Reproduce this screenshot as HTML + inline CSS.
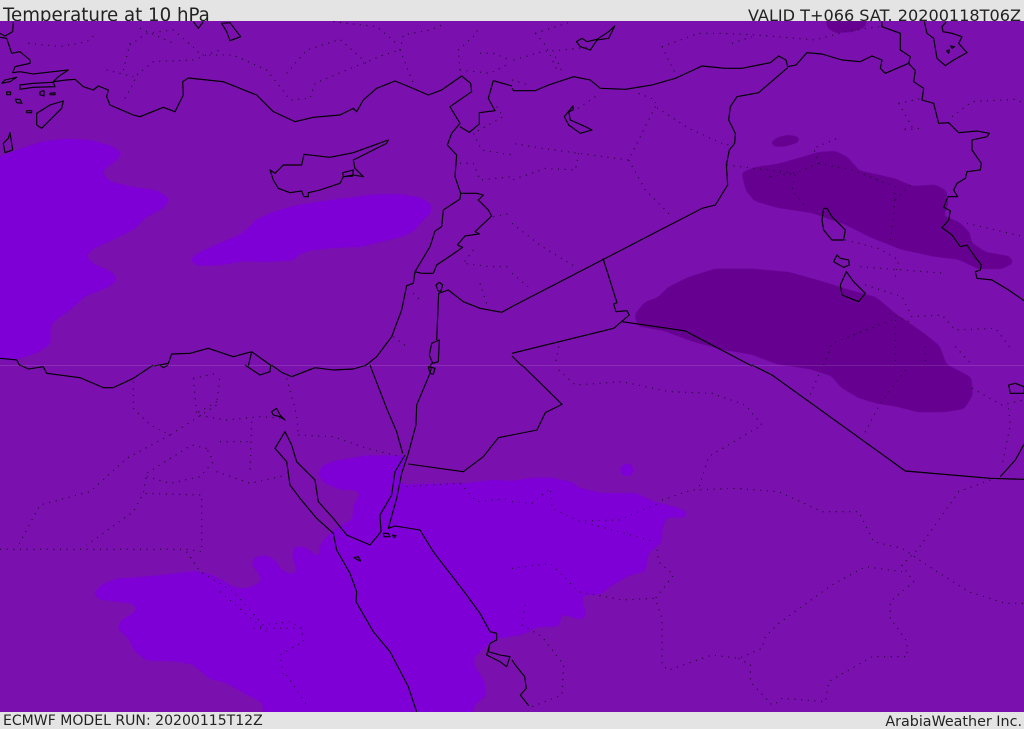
<!DOCTYPE html>
<html><head><meta charset="utf-8">
<style>
html,body{margin:0;padding:0;width:1024px;height:729px;overflow:hidden;background:#e4e4e4}
#w{position:relative;width:1024px;height:729px;overflow:hidden;background:#e4e4e4;font-family:"DejaVu Sans",sans-serif;color:#222}
.t{position:absolute;white-space:nowrap;line-height:1}
svg{position:absolute;left:0;top:21px}
.l{fill:none;stroke:#000;stroke-width:3.4;stroke-linejoin:round}
.d{fill:none;stroke:#000;stroke-width:3.2;stroke-dasharray:3 17;opacity:.8}
.b{fill:#7e00d6;stroke:#7e00d6;stroke-width:8;stroke-linejoin:round}
.k{fill:#660090;stroke:#660090;stroke-width:8;stroke-linejoin:round}
</style></head><body><div id="w">
<div class="t" style="left:3px;top:7px;font-size:18.2px;height:14px;overflow:hidden;line-height:18px">Temperature at 10 hPa</div>
<div class="t" style="right:3px;top:8px;font-size:16.1px;height:13px;overflow:hidden;line-height:16px">VALID T+066 SAT. 20200118T06Z</div>
<div class="t" style="left:3px;top:713px;font-size:14.06px;line-height:16px">ECMWF MODEL RUN: 20200115T12Z</div>
<div class="t" style="right:2px;top:714px;font-size:14.3px;line-height:16px">ArabiaWeather Inc.</div>
<svg width="1024" height="691" viewBox="0 21 1024 691" xmlns="http://www.w3.org/2000/svg">
<defs><filter id="s" x="-10%" y="-10%" width="120%" height="120%" color-interpolation-filters="sRGB"><feGaussianBlur stdDeviation="6"/><feComponentTransfer><feFuncA type="linear" slope="6" intercept="-2.5"/></feComponentTransfer></filter></defs>
<rect x="0" y="21" width="1024" height="691" fill="#7a10ad"/>
<g transform="scale(.33333)">
<polygon class="b" filter="url(#s)" points="-40,490 60,450 130,428 200,420 270,424 330,440 362,460 345,480 310,505 305,525 330,548 400,565 470,575 505,597 490,620 435,650 400,685 340,715 275,745 253,770 280,795 335,820 347,840 320,860 255,885 210,925 155,965 148,985 148,1030 110,1055 40,1078 -40,1072"/>
<polygon class="b" filter="url(#s)" points="575,778 600,760 660,733 720,708 750,685 770,662 820,640 880,622 960,608 1040,598 1120,587 1200,586 1260,596 1290,615 1290,638 1265,660 1240,690 1200,708 1130,725 1080,737 1000,740 930,748 895,760 880,778 800,782 730,780 660,792 590,793"/>
<g class="l">
<path d="M0,112L20,115 35,160 60,155 90,180 90,190 45,200 38,218 60,215 100,222 205,210 175,230 160,245 200,240 225,238 250,260 280,270 295,258 325,270 320,290 330,315 365,330 400,345 420,350 490,322 525,335 550,285 548,245 565,234 670,245 770,285 820,335 885,365 940,352 1020,345 1060,325 1070,335 1090,300 1130,265 1185,243 1215,255 1285,285 1325,270 1385,228 1412,250 1415,275 1350,320 1380,370 1355,400 1342,435 1370,465 1365,530 1382,580 1380,597 1330,630 1325,680 1305,693 1290,740 1245,815 1240,850 1220,857 1205,930 1175,1010 1130,1070 1095,1098"/>
<path d="M815,1098L755,1055 745,1098M755,1055L700,1070 625,1045 570,1060 515,1062 505,1090 462,1098M60,1098L50,1080 0,1075"/>
<path d="M40,65L38,95 15,108 0,100"/>
<path d="M1380,380L1408,397 1438,372 1438,338 1485,332 1465,295 1480,242 1536,258"/>
<path d="M810,510L825,520 850,495 905,495 912,463 990,472 1060,458 1165,420 1160,430 1090,465 1060,480 1065,505 1090,530 1060,525 1030,530 1020,550 960,570 925,578 925,590 912,590 905,573 870,578 835,565 820,540Z"/>
<path d="M1028,518L1060,510 1058,528 1030,530Z"/>
<path d="M190,303L185,325 150,360 125,385 110,375 110,340 150,315Z"/>
<path d="M15,240L50,232 30,245 5,250Z"/>
<path d="M60,255L100,250 160,247 165,260 100,262 60,268Z"/>
<path d="M30,398L35,430 38,450 15,458 10,430 25,415Z"/>
<path d="M665,70L690,68 722,110 690,122 680,95Z"/>
<path d="M580,65L595,85 610,65"/>
<path d="M120,275L132,272 132,288 120,284ZM150,280L165,278 165,284 150,284ZM20,276L32,276 32,284 20,284ZM46,298L60,298 66,310 50,308ZM80,332L95,332 95,338 80,338Z"/>
<path d="M1380,580L1430,580 1450,585 1435,600 1465,630 1475,648 1425,695 1438,702 1395,708 1372,735 1388,742 1355,765 1310,795 1300,820 1265,820 1245,815"/>
<path d="M1308,855L1318,847 1328,855 1322,875 1314,872Z"/>
<path d="M1316,880L1310,1020M1295,1030L1318,1020 1315,1085 1298,1090 1288,1065Z"/>
<path d="M1316,880L1345,870 1390,905 1440,925 1505,937 1536,920"/>
<path d="M1290,1098L1296,1090"/>
</g>
<g class="d">
<path d="M85,130L180,140 260,125 290,100"/>
<path d="M390,135L440,100 520,90 590,150 600,165 700,165 800,210 840,260 870,300 930,295 945,250 1040,210 1150,165 1200,150"/>
<path d="M375,295L395,260 410,225 460,185 580,180 660,150"/>
<path d="M320,210L400,230M370,210L390,130"/>
<path d="M860,220L920,150 1020,118 1090,180 1100,195"/>
<path d="M1200,150L1210,105 1290,90 1325,75M1380,210L1375,150 1430,100 1435,75M1200,150L1240,250"/>
<path d="M1380,210L1470,220 1530,190M1440,160L1480,160 1530,180"/>
<path d="M1490,320L1510,350 1420,400 1445,450 1536,465M1380,490L1420,490 1440,540 1536,530"/>
<path d="M1480,650L1536,640M1420,750L1390,790 1470,800 1536,800M1440,850L1460,910M1240,880L1260,900M1180,1010L1220,1040"/>
<path d="M1000,65L1130,80 1190,130M420,85L520,130"/>
</g>
</g>
<g transform="translate(512,0) scale(.33333)">
<polygon class="k" filter="url(#s)" points="693,520 730,505 800,495 860,478 920,460 970,457 1005,475 1040,515 1100,528 1150,540 1200,562 1270,558 1300,575 1305,610 1290,650 1340,670 1370,700 1375,730 1420,760 1490,772 1500,787 1470,803 1400,803 1340,775 1260,765 1170,745 1080,710 1000,670 900,635 800,620 730,600 705,570"/>
<polygon class="k" filter="url(#s)" points="372,945 400,910 440,895 470,865 530,835 610,810 720,810 830,820 920,845 1000,870 1090,895 1150,945 1230,1000 1280,1040 1300,1095 1375,1135 1378,1185 1355,1223 1300,1232 1220,1233 1150,1215 1100,1208 1040,1190 990,1160 960,1125 900,1105 840,1095 800,1090 720,1060 630,1045 540,1020 460,990 380,975"/>
<polygon class="k" filter="url(#s)" points="780,428 800,415 830,408 860,415 855,425 820,435 790,437"/>
<polygon class="k" filter="url(#s)" points="945,30 1058,30 1058,78 1020,92 970,95 948,80"/>
<g class="l">
<path d="M0,265L5,272 70,272 110,255 185,230 235,240 265,265 340,268 420,255 490,235 570,198 640,205 690,205 775,188 800,168 822,180 827,200 852,195 885,158 930,162 990,180 1045,185 1080,168 1110,180 1105,205 1120,220 1190,190"/>
<path d="M1110,65L1110,80 1165,100 1165,150 1195,170 1190,190 1210,212 1205,245 1235,265 1230,300 1265,310 1280,370 1310,368 1340,398 1395,393 1432,400 1425,410 1380,420 1380,450 1408,490 1405,510 1365,515 1360,535 1335,550 1325,570 1337,590 1308,590 1295,622 1315,632 1310,660 1290,683 1320,705 1345,740 1365,735 1385,765 1408,795 1405,810 1390,815 1395,835 1440,840 1490,870 1536,902"/>
<path d="M1237,65L1245,100 1265,115 1275,175 1300,197 1325,180 1365,158 1340,130 1350,110 1320,100 1293,95 1290,80 1303,65"/>
<path d="M1304,152L1312,150 1310,160ZM1316,138L1328,140 1320,145Z"/>
<path d="M827,203L740,278 675,290 655,320 650,360 670,400 668,430 652,450 643,495 647,555 610,615 570,625 0,920"/>
<path d="M273,775L315,908 305,912 312,935 345,932 352,945 305,985 0,1060"/>
<path d="M330,965L520,993 720,1098"/>
<path d="M0,1068L30,1098"/>
<path d="M935,625L930,660 935,690 960,720 995,720 1000,690 960,650 945,625Z"/>
<path d="M975,765L965,785 995,802 1012,795 1010,780 985,775Z"/>
<path d="M1003,815L985,855 990,885 1040,905 1060,880 1025,845Z"/>
<path d="M183,318L157,350 170,375 205,400 240,390 220,380 175,360 170,335 183,330Z"/>
<path d="M308,78L290,95 255,118 225,125 210,115 193,125 205,140 235,150 255,120 290,115 300,95Z"/>
</g>
<g class="d">
<path d="M70,100L180,65M70,100L100,135 135,210M5,180L90,155 170,148 240,140M130,170L150,215"/>
<path d="M450,140L560,100 630,100 735,105 910,120 1000,95 1100,80M450,140L490,220M660,130L735,105M0,240L50,255"/>
<path d="M250,290L190,330M380,280L430,300 430,320 530,385 640,435 668,430"/>
<path d="M430,320L350,480 200,460 90,445 0,430M350,480L400,570 480,650M200,460L190,510 100,505 0,540"/>
<path d="M645,495L850,520 920,490 905,445 975,415M775,530L850,520 840,570 880,620"/>
<path d="M920,490L1020,510 1150,560 1145,650 1135,720M1150,600L1200,550M1160,310L1230,295M1160,310L1200,380 1170,390 1225,385"/>
<path d="M1320,350L1380,305 1510,298 1536,310M1000,720L1100,745 1160,780 1150,830M1045,800L1300,820M1365,670L1536,710"/>
<path d="M1060,855L1170,890 1200,950 1290,945 1330,990 1450,985 1500,1050M1190,965L1120,935M1140,960L960,1030 935,1095M1150,960L1150,1090M1240,1040L1240,1095M1330,1040L1380,1095"/>
<path d="M0,670L90,740 190,800M0,820L60,870M140,1040L130,1095"/>
</g>
</g>
<g transform="translate(0,365) scale(.33333)">
<polygon class="b" filter="url(#s)" points="285,685 310,660 350,645 420,640 500,632 580,622 620,628 670,650 700,670 735,675 770,662 790,648 780,625 760,600 765,580 800,575 825,590 840,615 870,632 895,625 890,600 880,575 885,550 910,548 935,565 965,592 960,565 965,540 985,515 1010,495 1060,465 1065,420 1085,385 1070,372 1020,370 975,350 957,328 970,305 1010,290 1100,275 1200,275 1215,275 1205,300 1195,345 1205,362 1300,360 1400,358 1480,348 1536,352 1596,342 1656,342 1716,355 1736,372 1806,388 1906,388 1966,415 2046,435 2059,453 1996,455 1984,490 1981,530 1941,565 1934,615 1886,628 1831,660 1801,685 1746,687 1744,710 1756,750 1741,760 1681,742 1676,780 1611,783 1566,805 1536,810 1480,820 1420,875 1418,900 1450,950 1455,990 1418,1020 1418,1090 800,1090 790,1010 740,985 680,950 630,938 580,895 520,885 440,883 405,855 390,820 357,790 365,770 405,745 418,728 395,712 300,700"/>
<ellipse class="b" cx="1881" cy="315" rx="16" ry="14"/>
<g class="l">
<path d="M1100,0L1060,12 1000,15 945,8 875,35 845,22 815,0M735,0L780,30 810,20 812,0M460,0L400,40 340,68 310,68 240,38 140,25 130,5 85,12 60,0M480,0L490,8 505,0"/>
<path d="M1110,0L1160,130 1190,200 1208,265"/>
<path d="M1295,5L1290,25 1250,120 1248,180 1225,265 1205,325 1190,400 1165,490 1185,483 1260,495 1300,560 1350,625 1400,690 1440,745 1470,800 1490,805 1490,825 1470,835 1465,860 1500,870 1530,875 1520,905 1500,890 1460,870 1470,835"/>
<path d="M1215,270L1185,320 1175,390 1140,450 1143,500 1110,540 1040,510 1000,460 955,410 945,345 890,290 875,240 855,200 825,250 860,290 870,360 900,400 950,460 1000,505 1010,555 1050,625 1070,680 1068,710 1120,800 1170,860 1225,965 1250,1040"/>
<path d="M1536,210L1495,218 1450,275 1390,320 1225,297"/>
<path d="M815,140L830,130 840,150 855,165 840,155 820,150ZM1285,5L1305,10 1300,28 1290,25Z"/>
<path d="M1150,505L1165,505 1170,515 1152,515ZM1178,510L1188,512 1182,518ZM1062,578L1075,575 1082,588 1068,582Z"/>
</g>
<g class="d">
<path d="M400,50L400,130 450,180 510,210 650,120 660,30"/>
<path d="M510,210L380,280 270,380 120,420 50,550"/>
<path d="M0,553L560,553 605,560 605,390 420,385"/>
<path d="M620,250L575,240 440,325 430,385 400,440 260,540"/>
<path d="M440,335L510,355 600,335 640,290 620,250M650,320L750,355 860,330M660,230L750,230M755,170L750,330"/>
<path d="M580,40L590,150 680,165 780,155 850,160M580,40L650,25M650,110L590,145"/>
<path d="M895,210L1000,215 1100,250 1200,275M860,40L890,150 895,210"/>
<path d="M560,560L600,620 700,680 790,780 870,770 905,790 910,830 840,870 850,930M760,790L900,790M660,680L800,800M860,930L920,1020"/>
<path d="M1220,365L1380,355 1430,410 1536,400"/>
</g>
</g>
<g transform="translate(512,365) scale(.33333)">
<g class="l">
<path d="M30,0L150,118 100,143 75,195 0,210"/>
<path d="M720,0L780,30 1180,318 1435,340 1536,343"/>
<path d="M1465,335L1510,285 1536,238"/>
<path d="M0,885L10,900 38,935 43,970 25,990 50,1022"/>
<path d="M1490,60L1510,55 1536,65 1536,85 1495,85Z"/>
</g>
<g class="d">
<path d="M140,15L190,60 330,50 470,80 600,85 700,120 750,180 590,275 560,370"/>
<path d="M920,30L890,100M1180,15L1105,115 1055,210"/>
<path d="M450,405L540,375 670,370 800,380 930,440 1040,440 1085,530 1170,550 1260,610 1370,680 1480,715 1536,715"/>
<path d="M1435,345L1340,380 1220,550 1170,600 1205,650 1135,710 1135,760 1185,830 1185,875 1080,875 950,950 940,1010 810,1000 780,1025"/>
<path d="M1170,620L1060,605 960,660 800,775 760,815 750,850 680,880 600,870 470,915 450,900 450,760 430,700 485,630 440,590 435,550"/>
<path d="M0,410L60,415 115,370 120,430 200,468 320,465 440,415M200,468L430,530"/>
<path d="M0,610L115,595 200,680 330,705 430,700M680,880L715,900 715,950 780,1020"/>
<path d="M1490,130L1495,180 1470,300M1380,70L1470,120 1536,105M40,720L30,780 90,815 155,900 150,990 60,1025"/>
</g>
</g>
<rect x="0" y="365" width="1024" height="1" fill="#fff" opacity=".12"/>
</svg>
</div></body></html>
